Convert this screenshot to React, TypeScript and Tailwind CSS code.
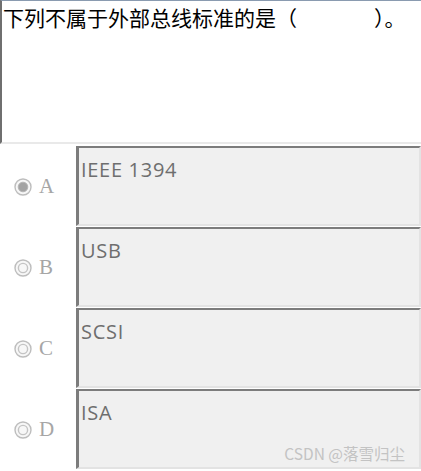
const options = [
  { key: "A", text: "IEEE 1394", checked: true },
  { key: "B", text: "USB", checked: false },
  { key: "C", text: "SCSI", checked: false },
  { key: "D", text: "ISA", checked: false },
];

function Radio({ checked }: { checked: boolean }) {
  return (
    <svg width="18" height="18" viewBox="0 0 18 18">
      <circle cx="9" cy="9" r="8" fill="#f7f7f7" stroke="#bdbdbd" strokeWidth="1.4" />
      {checked ? (
        <circle cx="9" cy="9" r="4.8" fill="#a3a3a3" stroke="#b5b5b5" strokeWidth="1" />
      ) : (
        <circle cx="9" cy="9" r="4.6" fill="none" stroke="#c4c4c4" strokeWidth="1.4" />
      )}
    </svg>
  );
}

export default function App() {
  return (
    <div className="relative h-[471px] w-[421px] overflow-hidden bg-white font-['Open_Sans',sans-serif]">
      <div className="h-[144px] whitespace-pre border-b-2 border-l-2 border-t border-b-[#e9e9e9] border-l-[#6f6f6f] border-t-[#8a9bb0] pl-[1px] pt-[3px] font-['Noto_Sans_CJK_SC',sans-serif] text-[21px] leading-[26px] text-black">
        下列不属于外部总线标准的是（　　　   ）。
      </div>
      <div className="flex flex-col gap-[1px] pt-[2px]">
        {options.map((o) => (
          <div key={o.key} className="flex h-[80px]">
            <div className="flex w-[76px] items-center gap-[7px] pl-[14px] pt-[2px]">
              <Radio checked={o.checked} />
              <span className="font-['Liberation_Serif',serif] text-[21px] font-light text-[#a6a6a6]">{o.key}</span>
            </div>
            <div className="flex-1 border-2 border-l-[3px] border-b-[#e3e3e3] border-l-[#7c7c7c] border-r-[#e3e3e3] border-t-[#7c7c7c] bg-[#f0f0f0] pl-[2px] pt-[10px] text-[20px] font-medium leading-[24px] tracking-[0.7px] text-[#6e6e6e]">
              {o.text}
            </div>
          </div>
        ))}
      </div>
      <span className="absolute bottom-[9px] right-[16px] font-['Noto_Sans_CJK_SC',sans-serif] text-[15.5px] leading-[17px] text-[#c3c3c3]">
        CSDN @落雪归尘
      </span>
    </div>
  );
}
